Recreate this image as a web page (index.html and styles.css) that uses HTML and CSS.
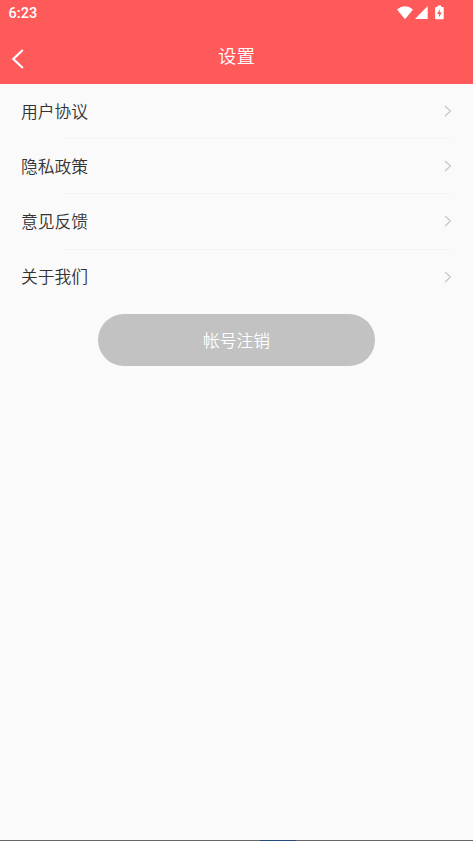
FILE: index.html
```html
<!DOCTYPE html>
<html lang="zh-CN">
<head>
<meta charset="utf-8">
<title>设置</title>
<link rel="stylesheet" href="styles.css">
</head>
<body>
<div class="screen">
  <div class="status">
    <span class="time">6:23</span>
    <svg class="status-icons" width="48" height="16" viewBox="0 0 48 16" fill="#fff">
      <path d="M0 4.6Q8-2 16 4.6L8 14.3z"/>
      <path d="M18 14H30.7V1.1z"/>
      <path fill-rule="evenodd" d="M40.6 .4h3.6v1.5h1.7q.8 0 .8.8v10.8q0 .8-.8.8h-7q-.8 0-.8-.8V2.7q0-.8.8-.8h1.7zM42.8 4.3L40 9h2v3.2L44.8 7.5h-2z"/>
    </svg>
  </div>
  <header class="nav">
    <svg class="back" width="14" height="22" viewBox="0 0 14 22"><path d="M11.8 2L2.3 11L11.8 20" fill="none" stroke="#fff" stroke-width="2.2"/></svg>
    <h1 class="title">设置</h1>
  </header>
  <ul class="list">
    <li class="row"><span>用户协议</span><svg class="arrow" width="8" height="12" viewBox="0 0 8 12"><path d="M1 1l5.5 5L1 11"/></svg></li>
    <li class="row"><span>隐私政策</span><svg class="arrow" width="8" height="12" viewBox="0 0 8 12"><path d="M1 1l5.5 5L1 11"/></svg></li>
    <li class="row"><span>意见反馈</span><svg class="arrow" width="8" height="12" viewBox="0 0 8 12"><path d="M1 1l5.5 5L1 11"/></svg></li>
    <li class="row"><span>关于我们</span><svg class="arrow" width="8" height="12" viewBox="0 0 8 12"><path d="M1 1l5.5 5L1 11"/></svg></li>
  </ul>
  <button class="logout">帐号注销</button>
  <div class="bottom"></div>
</div>
</body>
</html>
```
FILE: styles.css
```css
* { box-sizing: border-box; }
body { margin: 0; }
.screen {
  display: flex;
  flex-direction: column;
  height: 841px;
  background: #fafafa;
  font-family: Roboto, "Noto Sans CJK SC", sans-serif;
  font-weight: 350;
}
.status {
  display: flex;
  justify-content: space-between;
  height: 28px;
  padding: 5px 28px 0 8.6px;
  background: #ff5a5a;
}
.time {
  color: #fff;
  font-size: 14.5px;
  font-weight: 500;
  line-height: 17px;
}
.status-icons { flex: none; }
.nav {
  display: grid;
  grid-template-columns: 36px 1fr 36px;
  height: 56px;
  background: #ff5a5a;
}
.back { margin: 20px 0 0 11px; }
.title {
  margin: 0;
  color: #fff;
  font-size: 18.5px;
  font-weight: 350;
  line-height: 58px;
  text-align: center;
}
.list { margin: 0; padding: 0; list-style: none; }
.row {
  display: flex;
  align-items: center;
  justify-content: space-between;
  height: 55.2px;
  padding: 0 21px;
  color: #333;
  font-size: 16.8px;
  line-height: 24px;
  background: linear-gradient(#f4f4f4, #f4f4f4) 64px 100% / 387px 1px no-repeat;
}
.row:last-child { background: none; }
.arrow {
  margin-bottom: 1.2px;
  fill: none;
  stroke: #c4c4c4;
  stroke-width: 1.1;
}
.logout {
  width: 277px;
  height: 52px;
  margin: 9.2px auto 0;
  padding: 0;
  border: 0;
  border-radius: 26px;
  background: #c2c2c2;
  color: #fff;
  font: inherit;
  font-size: 16.8px;
}
.bottom {
  height: 1px;
  margin-top: auto;
  background: linear-gradient(#244a80, #244a80) 260px 0 / 36px 1px no-repeat #666;
}
```
